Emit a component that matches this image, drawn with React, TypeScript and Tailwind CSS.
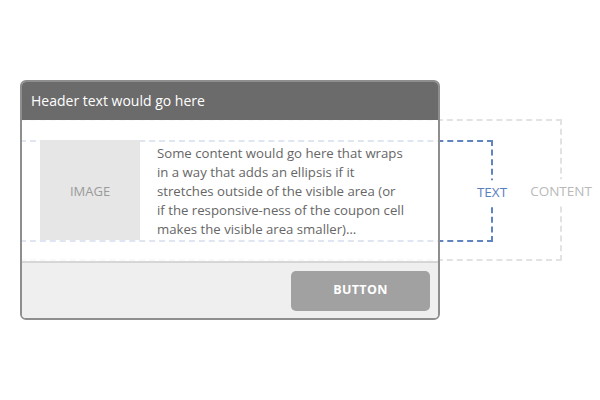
export default function App() {
  const lines = [
    "Some content would go here that wraps",
    "in a way that adds an ellipsis if it",
    "stretches outside of the visible area (or",
    "if the responsive-ness of the coupon cell",
    "makes the visible area smaller)…",
  ];
  return (
    <div className="w-[600px] h-[400px] bg-white pt-[80px] pl-[20px] font-['Open_Sans',sans-serif]">
      <div className="relative w-[420px]">
        {/* annotation layer: content + text boxes */}
        <div className="absolute left-0 top-[39px] w-[542px] h-[142px] border-2 border-dashed border-[#e2e2e2]">
          <div className="absolute left-[-2px] top-[19px] w-[473px] h-[102px] border-2 border-dashed border-[#5f84c0]">
            <span className="absolute right-[-1px] top-[calc(50%+2px)] translate-x-1/2 -translate-y-1/2 bg-white px-1 py-[6px] text-[13.5px] leading-none text-[#5b80c0]">
              TEXT
            </span>
          </div>
          <span className="absolute right-[-1px] top-[calc(50%+2px)] translate-x-1/2 -translate-y-1/2 bg-white px-1 py-[6px] text-[13.5px] leading-none text-[#b9b9b9]">
            CONTENT
          </span>
        </div>

        {/* card */}
        <div className="relative z-10 w-[420px] h-[240px] border-2 border-[#8e8e8e] rounded-md overflow-hidden flex flex-col">
          <div className="h-[38px] shrink-0 bg-[#6b6b6b] flex items-center pl-[9px] pb-[2px] text-[14px] text-white">
            Header text would go here
          </div>
          <div className="h-[141px] shrink-0 bg-white/80 flex pt-[20px] pl-[18px]">
            <div className="w-[100px] h-[100px] bg-[#e6e6e6] flex items-center justify-center pt-[4px] text-[13px] text-[#9a9a9a]">
              IMAGE
            </div>
            <div className="ml-[17px] pt-[4px] text-[13.2px] leading-[19px] text-[#666666]">
              {lines.map((l) => (
                <div key={l} className="whitespace-nowrap">
                  {l}
                </div>
              ))}
            </div>
          </div>
          <div className="flex-1 bg-[#efefef] border-t-2 border-[#d6d6d6] flex items-center justify-end pr-[8px]">
            <button className="w-[139px] h-[40px] rounded-[5px] bg-[#a1a1a1] text-white text-[12.5px] font-bold tracking-wide">
              BUTTON
            </button>
          </div>
        </div>
      </div>
    </div>
  );
}
